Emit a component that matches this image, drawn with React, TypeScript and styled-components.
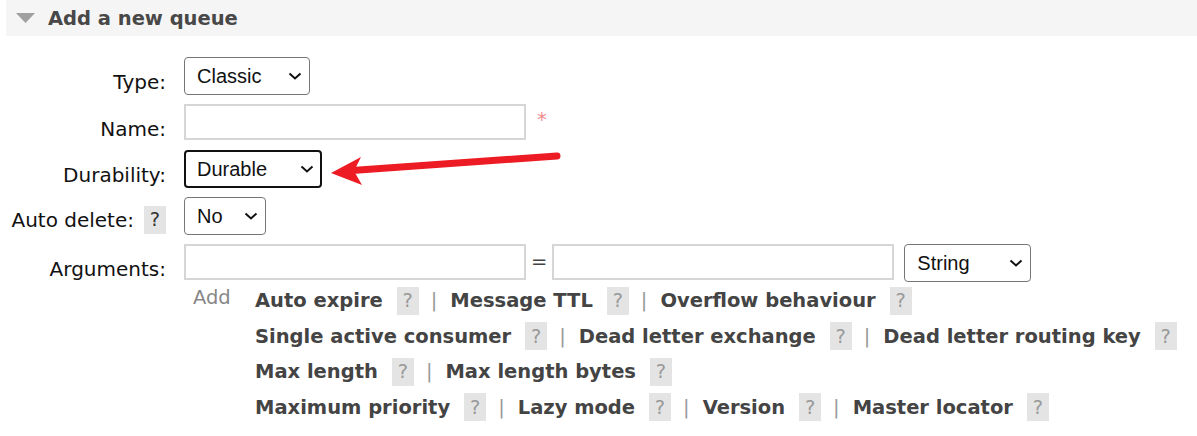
import React from "react";
import styled, { createGlobalStyle } from "styled-components";

const GlobalStyle = createGlobalStyle`
  body {
    margin: 0;
    background: #fff;
    font-family: "DejaVu Sans", Verdana, sans-serif;
  }
`;

const Page = styled.div`
  position: relative;
  width: 1197px;
  height: 436px;
  overflow: hidden;
`;

const SectionHeader = styled.div`
  margin-left: 6px;
  height: 36px;
  background: #f5f5f5;
  display: flex;
  align-items: center;
  gap: 13px;
  padding-left: 10px;
`;

const Title = styled.h2`
  margin: 0;
  font-size: 19.5px;
  font-weight: bold;
  color: #484848;
`;

const Form = styled.div`
  display: grid;
  grid-template-columns: 166px 1fr;
  column-gap: 18px;
  row-gap: 9px;
  padding-top: 21px;
`;

const Label = styled.label<{ $help?: boolean }>`
  display: flex;
  justify-content: flex-end;
  align-items: center;
  gap: 10px;
  padding-top: ${({ $help }) => ($help ? 9 : 13)}px;
  align-self: start;
  font-size: 20px;
  line-height: 24px;
  color: #111;
  white-space: nowrap;
`;

const Field = styled.div`
  display: flex;
  align-items: flex-start;
`;

const Help = styled.span<{ $dark?: boolean }>`
  display: inline-flex;
  flex: none;
  align-items: center;
  justify-content: center;
  width: 22px;
  height: 28px;
  background: #e4e4e4;
  color: ${({ $dark }) => ($dark ? "#333" : "#999")};
  font-size: 19.5px;
  font-weight: normal;
`;

const SelectWrap = styled.div<{ $w: number }>`
  position: relative;
  flex: none;
  width: ${({ $w }) => $w}px;
  height: 38px;
`;

const NativeSelect = styled.select<{ $focus?: boolean }>`
  appearance: none;
  width: 100%;
  height: 100%;
  box-sizing: border-box;
  border: ${({ $focus }) => ($focus ? "2px solid #111" : "1px solid #767676")};
  border-radius: 4px;
  background: #fff;
  padding: 0 0 0 ${({ $focus }) => ($focus ? 11 : 12)}px;
  font-family: "Liberation Sans", Arial, sans-serif;
  font-size: 20px;
  color: #111;
  outline: none;
`;

const Chevron = styled.svg`
  position: absolute;
  right: 8px;
  top: 50%;
  margin-top: -4px;
  pointer-events: none;
`;

const TextInput = styled.input`
  flex: none;
  width: 342px;
  height: 36px;
  box-sizing: border-box;
  border: 2px solid #d6d6d6;
  background: #fff;
  margin: 0;
  outline: none;
`;

const Mandatory = styled.span`
  margin-left: 11px;
  padding-top: 4px;
  color: #f08c8c;
  font-size: 19.5px;
  line-height: 24px;
`;

const Equals = styled.span`
  margin: 0 5px;
  font-size: 19.5px;
  line-height: 36px;
  color: #444;
`;

const Spacer = styled.div`
  flex: none;
  width: 10px;
`;

const AddRow = styled.div`
  grid-column: 2;
  display: flex;
  align-items: flex-start;
  margin-top: -8px;
`;

const AddLink = styled.span`
  width: 62px;
  padding-left: 9px;
  flex: none;
  color: #888;
  font-size: 19.5px;
  line-height: 30px;
`;

const ArgList = styled.div`
  display: flex;
  flex-direction: column;
`;

const ArgLine = styled.div`
  display: flex;
  align-items: center;
  height: 35.5px;
`;

const ArgLink = styled.span`
  font-size: 19.5px;
  font-weight: bold;
  color: #444;
  white-space: nowrap;
  margin-right: 14px;
`;

const Sep = styled.span`
  margin: 0 13px 0 12px;
  color: #999;
  font-size: 19.5px;
`;

const ArrowLayer = styled.svg`
  position: absolute;
  left: 0;
  top: 0;
  pointer-events: none;
`;

const Select = ({
  width,
  value,
  options,
  focus,
}: {
  width: number;
  value: string;
  options: string[];
  focus?: boolean;
}) => (
  <SelectWrap $w={width}>
    <NativeSelect $focus={focus} defaultValue={value}>
      {options.map((o) => (
        <option key={o}>{o}</option>
      ))}
    </NativeSelect>
    <Chevron width="14" height="8" viewBox="0 0 14 8">
      <polyline
        points="1.5,1.5 7,6.5 12.5,1.5"
        fill="none"
        stroke="#111"
        strokeWidth="2"
      />
    </Chevron>
  </SelectWrap>
);

const argLines: string[][] = [
  ["Auto expire", "Message TTL", "Overflow behaviour"],
  ["Single active consumer", "Dead letter exchange", "Dead letter routing key"],
  ["Max length", "Max length bytes"],
  ["Maximum priority", "Lazy mode", "Version", "Master locator"],
];

export default function App() {
  return (
    <Page>
      <GlobalStyle />
      <SectionHeader>
        <svg width="19" height="10" viewBox="0 0 19 10">
          <polygon points="0,0 19,0 9.5,10" fill="#a0a0a0" />
        </svg>
        <Title>Add a new queue</Title>
      </SectionHeader>
      <Form>
        <Label>Type:</Label>
        <Field>
          <Select width={126} value="Classic" options={["Classic", "Quorum", "Stream"]} />
        </Field>

        <Label>Name:</Label>
        <Field>
          <TextInput type="text" />
          <Mandatory>*</Mandatory>
        </Field>

        <Label>Durability:</Label>
        <Field>
          <Select width={138} value="Durable" options={["Durable", "Transient"]} focus />
        </Field>

        <Label $help>
          Auto delete:
          <Help $dark>?</Help>
        </Label>
        <Field>
          <Select width={82} value="No" options={["No", "Yes"]} />
        </Field>

        <Label>Arguments:</Label>
        <Field>
          <TextInput type="text" />
          <Equals>=</Equals>
          <TextInput type="text" />
          <Spacer />
          <Select width={127} value="String" options={["String", "Number", "Boolean", "List"]} />
        </Field>

        <AddRow>
          <AddLink>Add</AddLink>
          <ArgList>
            {argLines.map((line, i) => (
              <ArgLine key={i}>
                {line.map((name, j) => (
                  <React.Fragment key={name}>
                    {j > 0 && <Sep>|</Sep>}
                    <ArgLink>{name}</ArgLink>
                    <Help>?</Help>
                  </React.Fragment>
                ))}
              </ArgLine>
            ))}
          </ArgList>
        </AddRow>
      </Form>
      <ArrowLayer width="1197" height="436" viewBox="0 0 1197 436">
        <line x1="352" y1="170.5" x2="557" y2="156" stroke="#ed1c24" strokeWidth="7" strokeLinecap="round" />
        <polygon points="331,173 361,157 354,171 362,185" fill="#ed1c24" />
      </ArrowLayer>
    </Page>
  );
}
